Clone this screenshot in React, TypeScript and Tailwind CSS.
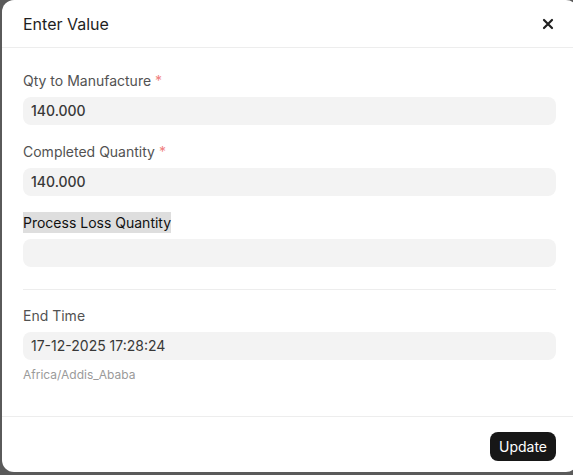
import React from 'react';

type FieldProps = {
  label: string;
  value?: string;
  required?: boolean;
  highlight?: boolean;
};

function Field({ label, value, required, highlight }: FieldProps) {
  return (
    <div className="flex flex-col">
      <div className="h-[21px] flex items-center">
        <span
          className={
            highlight
              ? 'bg-[#dedede] text-[#111111] text-sm leading-[21px]'
              : 'text-[#525252] text-sm leading-[21px]'
          }
        >
          {label}
        </span>
        {required && <span className="ml-1 text-sm text-[#f08080]">*</span>}
      </div>
      <div className="mt-1.5 h-7 rounded-lg bg-[#f3f3f3] px-2 flex items-center text-sm font-medium text-[#383838]">
        {value}
      </div>
    </div>
  );
}

export default function App() {
  return (
    <div
      className="w-[573px] h-[475px] overflow-hidden bg-[#5a5a5a]"
      style={{ fontFamily: 'Inter, "Noto Sans", sans-serif' }}
    >
      <div className="ml-[2px] w-[576px] h-[472px] rounded-xl bg-white flex flex-col">
        {/* Header */}
        <div className="h-[48px] border-b border-[#ededed] flex items-center justify-between pl-[21px] pr-[24px]">
          <h2 className="text-base text-[#1f1f1f]">Enter Value</h2>
          <svg width="12" height="12" viewBox="0 0 12 12" className="text-[#1f1f1f]">
            <path d="M2 2 L10 10 M10 2 L2 10" stroke="currentColor" strokeWidth="2.2" strokeLinecap="round" />
          </svg>
        </div>

        {/* Body */}
        <div className="pl-[21px] pt-[22px] pr-[22px]">
          <div className="flex flex-col gap-4">
            <Field label="Qty to Manufacture" value="140.000" required />
            <Field label="Completed Quantity" value="140.000" required />
            <Field label="Process Loss Quantity" highlight />
          </div>

          <div className="mt-[22px] border-t border-[#ededed]" />

          <div className="mt-[15px] flex flex-col">
            <div className="h-[21px] flex items-center text-sm text-[#525252]">End Time</div>
            <div className="mt-1.5 h-7 rounded-lg bg-[#f3f3f3] px-2 flex items-center text-sm text-[#383838]">
              17-12-2025 17:28:24
            </div>
            <div className="mt-[7px] text-xs text-[#9a9a9a]">Africa/Addis_Ababa</div>
          </div>
        </div>

        {/* Footer */}
        <div className="mt-auto border-t border-[#ededed] h-[56px] flex items-start justify-end pt-[15px] pr-[22px]">
          <button className="h-[29px] px-[9px] rounded-lg bg-[#171717] text-white text-sm">Update</button>
        </div>
      </div>
    </div>
  );
}
